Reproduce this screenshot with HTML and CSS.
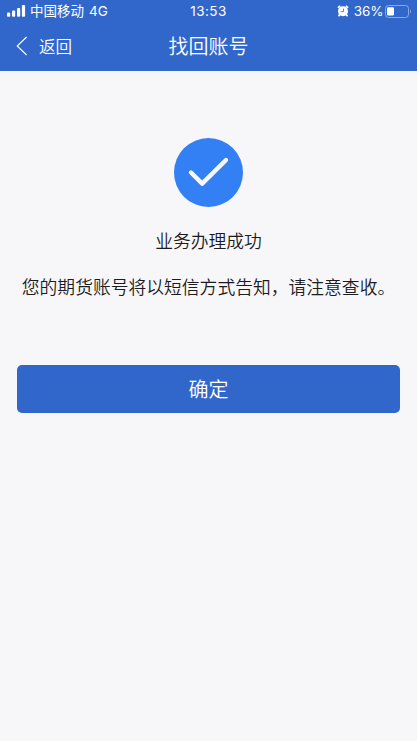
FILE: index.html
```html
<!DOCTYPE html>
<html lang="zh-CN">
<head>
<meta charset="utf-8">
<meta name="viewport" content="width=device-width, initial-scale=1">
<title>找回账号</title>
<link rel="stylesheet" href="styles.css">
</head>
<body>
<header class="header">
  <div class="status">
    <div class="status-left">
      <svg class="signal" width="19" height="12" viewBox="0 0 19 12" fill="#fff">
        <rect x="0" y="7.5" width="3.2" height="4.3" rx="1"/>
        <rect x="5" y="5.5" width="3.2" height="6.3" rx="1"/>
        <rect x="10" y="3" width="3.2" height="8.8" rx="1"/>
        <rect x="14.9" y="0" width="3.2" height="11.8" rx="1"/>
      </svg>
      <span class="carrier">中国移动</span>
      <span class="network">4G</span>
    </div>
    <span class="time">13:53</span>
    <div class="status-right">
      <svg class="alarm" width="12" height="12" viewBox="0 0 12 12">
        <path d="M1.5 2.3 2.6 1.3M9.4 1.3l1.1 1M2.8 9.6l-.9 1M9.2 9.6l.9 1" stroke="#fff" stroke-width="1.8" stroke-linecap="round"/>
        <circle cx="6" cy="6.2" r="5" fill="#fff"/>
        <path d="M6.5 3.6v3.1H3.6" fill="none" stroke="#3167cb" stroke-width=".8"/>
      </svg>
      <span class="percent">36%</span>
      <svg class="battery" width="27" height="13" viewBox="0 0 27 13">
        <rect x=".5" y=".5" width="23" height="12" rx="3" fill="none" stroke="#8daae2"/>
        <rect x="2" y="2.2" width="7" height="8.2" rx="1.2" fill="#fff"/>
        <path d="M25 4.3q2 2.2 0 4.4z" fill="#8daae2"/>
      </svg>
    </div>
  </div>
  <nav class="nav">
    <a class="back">
      <svg width="12" height="20" viewBox="0 0 12 20" fill="none" stroke="#fff" stroke-width="1.1"><path d="M10.6 1 1.2 10l9.4 9"/></svg>
      <span>返回</span>
    </a>
    <h1 class="title">找回账号</h1>
  </nav>
</header>
<main class="content">
  <svg class="success" width="69" height="69" viewBox="0 0 69 69">
    <circle cx="34.5" cy="34.5" r="34.5" fill="#3280f3"/>
    <path d="M17 34.5 28.2 45.6 52 22" fill="none" stroke="#f7f7fa" stroke-width="4.4" stroke-linecap="round" stroke-linejoin="round"/>
  </svg>
  <p class="result">业务办理成功</p>
  <p class="message">您的期货账号将以短信方式告知，请注意查收。</p>
  <button class="confirm">确定</button>
</main>
</body>
</html>
```
FILE: styles.css
```css
* { box-sizing: border-box; }
body {
  margin: 0;
  min-height: 741px;
  background: #f7f7fa;
  color: #1c1c1e;
  font-family: Inter, "Noto Sans CJK SC", sans-serif;
}
svg { display: block; flex: none; }
.header { height: 71px; background: #3167cb; color: #fff; }
.status {
  display: grid;
  grid-template-columns: 1fr auto 1fr;
  align-items: center;
  height: 22px;
  padding: 0 5px 0 7px;
  font-size: 13.5px;
  line-height: 22px;
  white-space: nowrap;
}
.status-left, .status-right { display: flex; align-items: center; }
.status-right { justify-content: flex-end; }
.carrier { margin-left: 4px; }
.network { margin-left: 5px; }
.time { margin-right: 2px; letter-spacing: .4px; }
.percent { margin: 0 1.5px 0 4.5px; letter-spacing: -.1px; }
.nav {
  display: grid;
  grid-template-columns: 1fr auto 1fr;
  align-items: center;
  height: 49px;
  padding: 0 16px;
}
.back { display: flex; align-items: center; gap: 11px; margin-top: -2px; font-size: 16.5px; font-weight: 350; }
.title { margin: 0; font-size: 20px; font-weight: 350; line-height: 30px; }
.content {
  display: flex;
  flex-direction: column;
  align-items: center;
  padding: 67px 16.6px 0;
}
.result, .message { margin: 0; font-size: 17.8px; font-weight: 350; line-height: 26px; white-space: nowrap; }
.result { margin-top: 22px; }
.message { margin-top: 20px; }
.confirm {
  width: 100%;
  height: 47.6px;
  margin-top: 64.4px;
  padding: 1px 0 0;
  border: 0;
  border-radius: 5px;
  background: #3167cb;
  color: #fff;
  font: 350 20px/46px Inter, "Noto Sans CJK SC", sans-serif;
}
```
